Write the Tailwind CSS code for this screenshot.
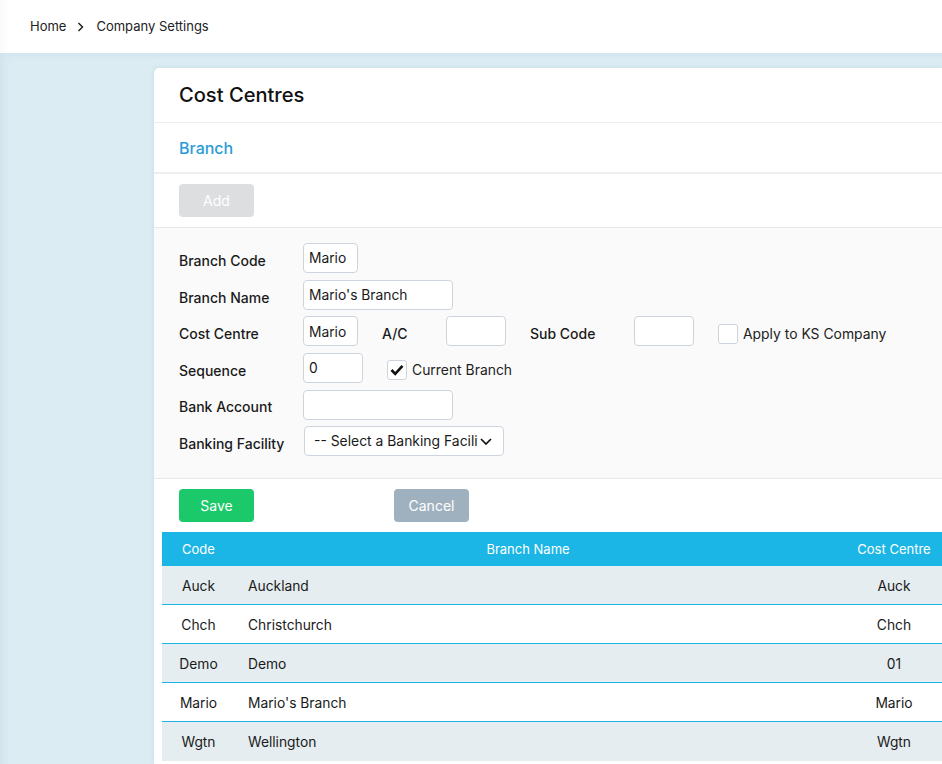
<!DOCTYPE html>
<html lang="en">
<head>
    <meta charset="UTF-8">
    <title>Cost Centres</title>
    <script src="https://cdn.jsdelivr.net/npm/@tailwindcss/browser@4"></script>
</head>
<body class="bg-white text-[#1a1a1a] h-[764px] w-[942px] overflow-hidden font-['Inter',sans-serif] text-[13.8px]">
    <!-- header -->
    <div class="h-[53px] bg-white flex items-center pl-[30px] pt-[1px] shadow-[inset_8px_0_8px_-6px_rgba(130,150,160,0.08)]">
        <span class="text-[#222] text-[13px]">Home</span>
        <svg class="w-[8px] h-[10px] ml-[11px] mr-[11px]" viewBox="0 0 8 10" fill="none" stroke="#222" stroke-width="1.5"><path d="M1.5 1l4 4-4 4"/></svg>
        <span class="text-[#222] text-[13px]">Company Settings</span>
    </div>

    <!-- content background -->
    <div class="h-[711px] bg-[#dcecf3] pt-[15px] pl-[154px] shadow-[inset_8px_6px_10px_-6px_rgba(150,185,200,0.22)]">
        <!-- card -->
        <div class="w-[788px] h-[696px] bg-white rounded-tl-[5px] overflow-hidden shadow-[0_0_4px_rgba(150,180,195,0.35)]">
            <div class="h-[55px] border-b border-[#eeeeee] pl-[25px] flex items-center">
                <h1 class="text-[20.1px] font-medium text-[#111]">Cost Centres</h1>
            </div>
            <div class="h-[51px] border-b-2 border-[#eeeeee] pl-[25px] flex items-center">
                <h2 class="text-base font-medium text-[#2a9bd8]">Branch</h2>
            </div>
            <div class="h-[54px] border-b border-[#e8e8e8] pl-[25px] pt-[10px]">
                <button class="w-[75px] h-[33px] rounded-[4px] bg-[#dddee0] text-white text-sm">Add</button>
            </div>

            <!-- form -->
            <div class="h-[251px] bg-[#fafafa] border-b border-[#e8e8e8] pl-[25px] pt-[15px]">
                <div class="flex h-[36.7px]">
                    <label class="w-[124px] font-medium text-sm pt-[8px]">Branch Code</label>
                    <input value="Mario" class="w-[55px] h-[30px] px-[5px] pb-[1px] bg-white border border-[#ced4de] rounded-[4px]">
                </div>
                <div class="flex h-[36.7px]">
                    <label class="w-[124px] font-medium text-sm pt-[8px]">Branch Name</label>
                    <input value="Mario's Branch" class="w-[150px] h-[30px] px-[5px] bg-white border border-[#ced4de] rounded-[4px]">
                </div>
                <div class="flex h-[36.7px]">
                    <label class="w-[124px] font-medium text-sm pt-[8px]">Cost Centre</label>
                    <input value="Mario" class="w-[55px] h-[30px] px-[5px] pt-[1px] bg-white border border-[#ced4de] rounded-[4px]">
                    <label class="ml-[24px] w-[64px] font-medium text-sm pt-[8px]">A/C</label>
                    <input class="w-[60px] h-[30px] bg-white border border-[#ced4de] rounded-[4px]">
                    <label class="ml-[24px] w-[104px] font-medium text-sm pt-[8px]">Sub Code</label>
                    <input class="w-[60px] h-[30px] bg-white border border-[#ced4de] rounded-[4px]">
                    <span class="ml-[24px] mt-[8px] w-[20px] h-[20px] bg-white border border-[#ced4de] rounded-[3px]"></span>
                    <span class="ml-[5px] pt-[8px] text-[#222] text-[13.9px]">Apply to KS Company</span>
                </div>
                <div class="flex h-[36.7px]">
                    <label class="w-[124px] font-medium text-sm pt-[8px]">Sequence</label>
                    <input value="0" class="w-[60px] h-[30px] px-[5px] bg-white border border-[#ced4de] rounded-[4px]">
                    <span class="ml-[24px] mt-[7px] w-[20px] h-[20px] bg-white border border-[#ced4de] rounded-[3px] flex items-center justify-center">
                        <svg class="w-[14px] h-[12px]" viewBox="0 0 14 12" fill="none" stroke="#111" stroke-width="2.6"><path d="M1.5 6l3.7 3.8L12.5 1.8"/></svg>
                    </span>
                    <span class="ml-[5px] pt-[7px] text-[#222] text-[13.9px]">Current Branch</span>
                </div>
                <div class="flex h-[36.7px]">
                    <label class="w-[124px] font-medium text-sm pt-[7px]">Bank Account</label>
                    <input class="w-[150px] h-[30px] bg-white border border-[#ced4de] rounded-[4px]">
                </div>
                <div class="flex h-[36.7px]">
                    <label class="w-[125px] font-medium text-sm pt-[8px]">Banking Facility</label>
                    <div class="relative w-[200px] h-[30px]">
                        <select class="appearance-none w-full h-full pl-[9px] pr-[25px] bg-white border border-[#ced4de] rounded-[4px] text-[13.9px]">
                            <option>-- Select a Banking Facility --</option>
                        </select>
                        <svg class="absolute left-[176px] top-[12px] w-[12px] h-[7px]" viewBox="0 0 12 7" fill="none" stroke="#111" stroke-width="1.7"><path d="M1 1l5 5 5-5"/></svg>
                    </div>
                </div>
            </div>

            <!-- buttons -->
            <div class="h-[53px] pl-[25px] pt-[10px] flex">
                <button class="w-[75px] h-[33px] rounded-[4px] bg-[#1bc96a] text-white text-sm">Save</button>
                <button class="ml-[140px] w-[75px] h-[33px] rounded-[4px] bg-[#9fb1be] text-white text-sm">Cancel</button>
            </div>

            <!-- table -->
            <table class="ml-[8px] w-[805px] table-fixed border-separate border-spacing-0">
                <thead>
                    <tr class="h-[34px] bg-[#1bb6e5] text-white text-[13px]">
                        <th class="w-[73px] pt-[1px] font-normal text-center">Code</th>
                        <th class="w-[586px] pt-[1px] font-normal text-center">Branch Name</th>
                        <th class="w-[146px] pt-[1px] font-normal text-center">Cost Centre</th>
                    </tr>
                </thead>
                <tbody>
                    <tr class="h-[39px] bg-[#e5edf0]">
                        <td class="pt-[2px] text-center border-b border-[#1bb6e5]">Auck</td>
                        <td class="pt-[2px] pl-[13px] border-b border-[#1bb6e5]">Auckland</td>
                        <td class="pt-[2px] text-center border-b border-[#1bb6e5]">Auck</td>
                    </tr>
                    <tr class="h-[39px] bg-white">
                        <td class="pt-[2px] text-center border-b border-[#1bb6e5]">Chch</td>
                        <td class="pt-[2px] pl-[13px] border-b border-[#1bb6e5]">Christchurch</td>
                        <td class="pt-[2px] text-center border-b border-[#1bb6e5]">Chch</td>
                    </tr>
                    <tr class="h-[39px] bg-[#e5edf0]">
                        <td class="pt-[2px] text-center border-b border-[#1bb6e5]">Demo</td>
                        <td class="pt-[2px] pl-[13px] border-b border-[#1bb6e5]">Demo</td>
                        <td class="pt-[2px] text-center border-b border-[#1bb6e5]">01</td>
                    </tr>
                    <tr class="h-[39px] bg-white">
                        <td class="pt-[2px] text-center border-b border-[#1bb6e5]">Mario</td>
                        <td class="pt-[2px] pl-[13px] border-b border-[#1bb6e5]">Mario's Branch</td>
                        <td class="pt-[2px] text-center border-b border-[#1bb6e5]">Mario</td>
                    </tr>
                    <tr class="h-[39px] bg-[#e5edf0]">
                        <td class="pt-[1px] text-center">Wgtn</td>
                        <td class="pt-[1px] pl-[13px]">Wellington</td>
                        <td class="pt-[1px] text-center">Wgtn</td>
                    </tr>
                </tbody>
            </table>
        </div>
    </div>
</body>
</html>
